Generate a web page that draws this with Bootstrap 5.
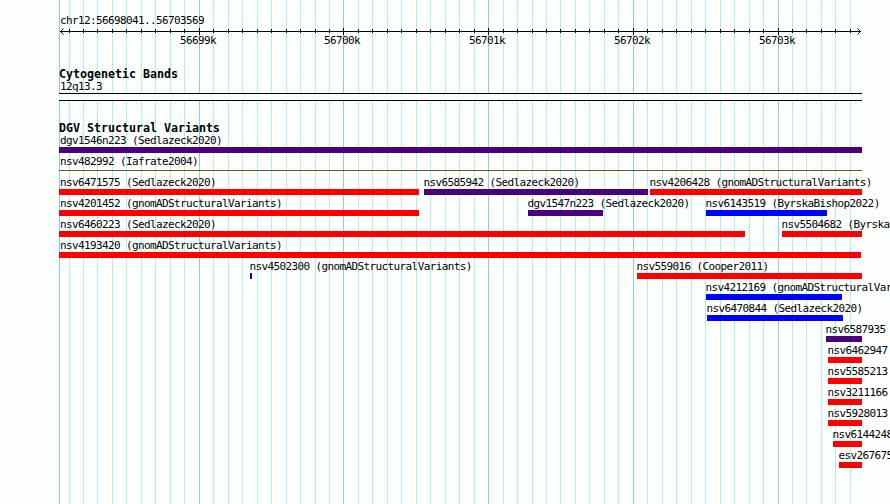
<!DOCTYPE html>
<html lang="en">
<head>
<meta charset="utf-8">
<title>chr12:56698041..56703569</title>
<link href="https://cdn.jsdelivr.net/npm/bootstrap@5.3.0/dist/css/bootstrap.min.css" rel="stylesheet">
<style>
body{background:#fdfffd;color:#000;font:11px/12px "DejaVu Sans Mono","Liberation Mono",monospace;letter-spacing:-.622px}
.browser{width:890px;height:504px}
.gridlines{z-index:0}
.tracks{z-index:1;padding-top:15px}
.region{height:12px;margin-left:60px}
.ruler{height:8px}
.ticks{height:12px}
.lane{display:grid;height:21px;grid-template-columns:890px}
.lane>*,.ticks>*{grid-area:1/1}
.ticks{display:grid;grid-template-columns:890px}
.ticks>*{margin-left:calc(var(--s)*1px)}
.feature{margin-left:calc(var(--s)*1px);width:calc(var(--w)*1px)}
.feature span{display:block;height:12px;margin-left:-.4px}
.feature.clipped span{margin-left:1px}
.feature::after{content:"";display:block;height:6px;background:var(--c)}
.gain{--c:#00f}.loss{--c:#f00}.both{--c:#4b0082}.inv{--c:#8b4513}
.feature.inv::after{height:1px;margin-top:2px}
.track-title{font-weight:700;font-size:11.65px;letter-spacing:-.014px;height:13px;margin:0 0 0 59px;line-height:12px}
.cyto{height:54px;margin-top:21px}
.band{margin-left:59px;width:803px;height:8px;border:solid #000;border-width:1px 0;background:#fdfffd}
</style>
<script src="https://cdn.jsdelivr.net/npm/bootstrap@5.3.0/dist/js/bootstrap.bundle.min.js"></script>
</head>
<body>
<main class="browser position-relative overflow-hidden text-nowrap">
<svg class="gridlines position-absolute top-0 start-0" width="890" height="504" shape-rendering="crispEdges"><path id="minor" stroke="#afeeee"/><path id="major" stroke="#87ceeb"/></svg>
<div class="tracks position-relative d-flex flex-column">
<div class="region">chr12:56698041..56703569</div>
<svg class="ruler d-block" width="890" height="8" viewBox="0 27 890 8" shape-rendering="crispEdges" stroke="#000" fill="none"><path d="M60 31.5H861"/><path id="minorTicks"/><path id="majorTicks"/><path shape-rendering="auto" d="M63.5 28.5L60.5 31.5L63.5 34.5M857.5 28.5L860.5 31.5L857.5 34.5"/></svg>
<div class="ticks"><span style="--s:180">56699k</span><span style="--s:324">56700k</span><span style="--s:469">56701k</span><span style="--s:614">56702k</span><span style="--s:759">56703k</span></div>
<section class="cyto"><h2 class="track-title">Cytogenetic Bands</h2><div class="region">12q13.3</div><div class="band"></div></section>
<section class="variants"><h2 class="track-title">DGV Structural Variants</h2>
<div class="lane"><div class="feature clipped both" style="--s:59;--w:803"><span>dgv1546n223 (Sedlazeck2020)</span></div></div>
<div class="lane"><div class="feature clipped inv" style="--s:59;--w:803"><span>nsv482992 (Iafrate2004)</span></div></div>
<div class="lane"><div class="feature clipped loss" style="--s:59;--w:360"><span>nsv6471575 (Sedlazeck2020)</span></div><div class="feature both" style="--s:424;--w:224"><span>nsv6585942 (Sedlazeck2020)</span></div><div class="feature loss" style="--s:650;--w:212"><span>nsv4206428 (gnomADStructuralVariants)</span></div></div>
<div class="lane"><div class="feature clipped loss" style="--s:59;--w:360"><span>nsv4201452 (gnomADStructuralVariants)</span></div><div class="feature both" style="--s:528;--w:75"><span>dgv1547n223 (Sedlazeck2020)</span></div><div class="feature gain" style="--s:706;--w:121"><span>nsv6143519 (ByrskaBishop2022)</span></div></div>
<div class="lane"><div class="feature clipped loss" style="--s:59;--w:686"><span>nsv6460223 (Sedlazeck2020)</span></div><div class="feature loss" style="--s:782;--w:80"><span>nsv5504682 (ByrskaBishop2022)</span></div></div>
<div class="lane"><div class="feature clipped loss" style="--s:59;--w:802"><span>nsv4193420 (gnomADStructuralVariants)</span></div></div>
<div class="lane"><div class="feature gain" style="--s:250;--w:2"><span>nsv4502300 (gnomADStructuralVariants)</span></div><div class="feature loss" style="--s:637;--w:225"><span>nsv559016 (Cooper2011)</span></div></div>
<div class="lane"><div class="feature gain" style="--s:706;--w:136"><span>nsv4212169 (gnomADStructuralVariants)</span></div></div>
<div class="lane"><div class="feature gain" style="--s:707;--w:136"><span>nsv6470844 (Sedlazeck2020)</span></div></div>
<div class="lane"><div class="feature both" style="--s:826;--w:36"><span>nsv6587935</span></div></div>
<div class="lane"><div class="feature loss" style="--s:828;--w:34"><span>nsv6462947</span></div></div>
<div class="lane"><div class="feature loss" style="--s:828;--w:34"><span>nsv5585213</span></div></div>
<div class="lane"><div class="feature loss" style="--s:828;--w:34"><span>nsv3211166</span></div></div>
<div class="lane"><div class="feature loss" style="--s:828;--w:34"><span>nsv5928013</span></div></div>
<div class="lane"><div class="feature loss" style="--s:833;--w:29"><span>nsv6144248</span></div></div>
<div class="lane"><div class="feature loss" style="--s:839;--w:23"><span>esv2676758</span></div></div>
</section>
</div>
</main>
<script>
const minor=[69,83,97,112,126,141,155,170,184,213,228,242,257,271,286,300,315,329,358,372,387,401,416,430,445,459,474,503,517,532,546,560,575,589,604,618,647,662,676,691,705,720,734,749,763,792,806,821,835,850];
const major=[199,343,488,633,778];
const lines=(xs,y,h)=>xs.map(x=>`M${x+.5} ${y}v${h}`).join('');
const draw=(id,d)=>document.getElementById(id).setAttribute('d',d);
draw('minor',lines(minor,0,504));
draw('major',lines([59,...major],0,504));
draw('minorTicks',lines(minor,29,4));
draw('majorTicks',lines(major,28,7));
</script>
</body>
</html>
